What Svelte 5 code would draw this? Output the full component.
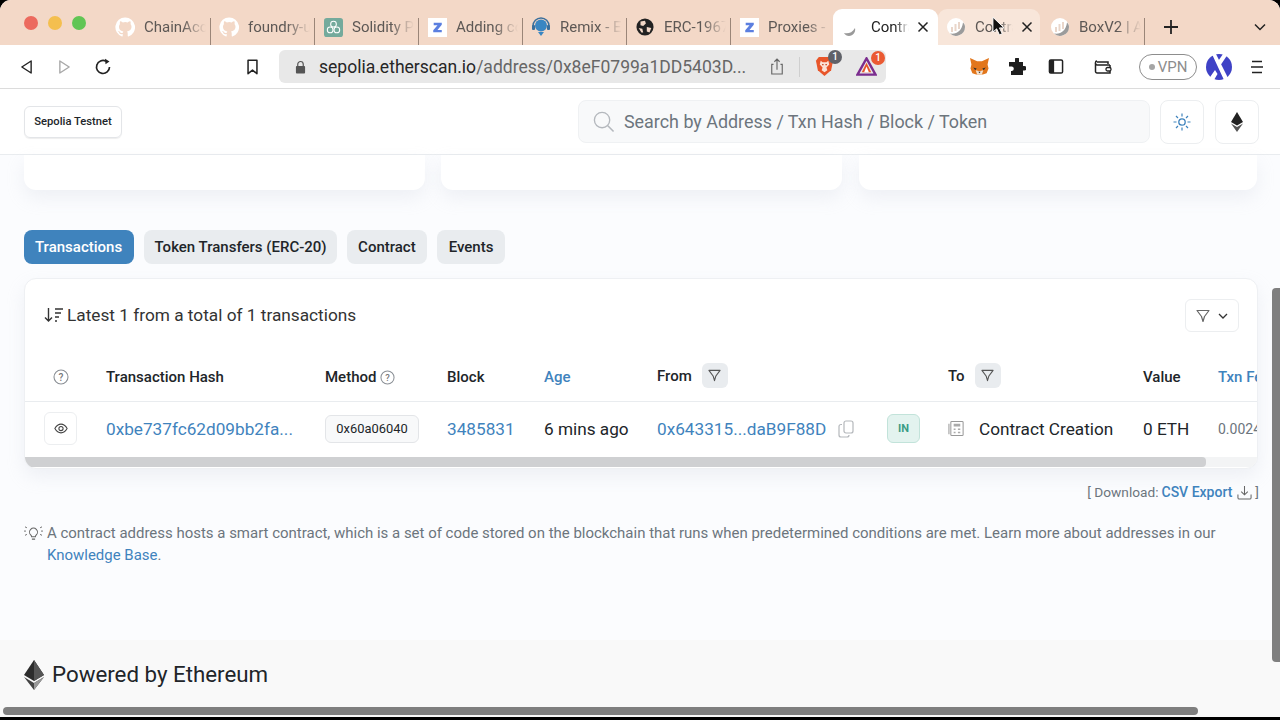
<script>
  const tabs = [
    { t: 'ChainAccount', i: 'gh' }, { t: 'foundry-upgrades', i: 'gh' }, { t: 'Solidity Patterns', i: 'gpt' },
    { t: 'Adding contracts', i: 'z' }, { t: 'Remix - Ethereum', i: 'remix' }, { t: 'ERC-1967 Proxy', i: 'globe' },
    { t: 'Proxies - OpenZep', i: 'z' }, { t: 'Contract', i: 'spin', active: true, close: true },
    { t: 'Contract', i: 'scan', hover: true, close: true }, { t: 'BoxV2 | Address', i: 'scan', last: true }
  ];
</script>

<div class="window">
  <div class="tabbar">
    <div class="lights"><i class="red"></i><i class="yellow"></i><i class="green"></i></div>
    {#each tabs as tab}
      <div class="tab" class:active={tab.active} class:hover={tab.hover} class:last={tab.last}>
        <span class="fav">
          {#if tab.i === 'gh'}
            <svg viewBox="0 0 20 20" width="20" height="20"><path fill="#fff" d="M10 0.5a9.7 9.7 0 0 0-3 18.9c.5.1.7-.2.7-.5v-1.8c-2.7.6-3.300-1.200-3.300-1.200-.4-1.100-1.100-1.400-1.100-1.400-.9-.6.1-.6.1-.6 1 .1 1.500 1 1.500 1 .9 1.500 2.300 1.100 2.900.8.1-.6.3-1.100.6-1.300-2.200-.3-4.400-1.100-4.400-4.800 0-1.100.4-1.900 1-2.600-.1-.2-.4-1.200.1-2.600 0 0 .8-.3 2.700 1a9 9 0 0 1 4.900 0c1.900-1.300 2.700-1 2.700-1 .5 1.400.2 2.400.1 2.600.6.7 1 1.500 1 2.600 0 3.700-2.300 4.500-4.500 4.800.4.300.7.900.7 1.800v2.700c0 .3.2.6.700.5A9.700 9.700 0 0 0 10 .5z"/></svg>
          {:else if tab.i === 'gpt'}
            <svg viewBox="0 0 20 20" width="19" height="19"><rect width="20" height="20" rx="3" fill="#74aa9c"/><g fill="none" stroke="#fff" stroke-width="1.100"><circle cx="10" cy="6.500" r="3"/><circle cx="6.500" cy="12.500" r="3"/><circle cx="13.500" cy="12.500" r="3"/></g></svg>
          {:else if tab.i === 'z'}
            <svg viewBox="0 0 20 20" width="19" height="19"><rect width="20" height="20" fill="#fff"/><path fill="#5b7fe0" d="M6 5h8.500v2L10 12.500h4.500V15H5.500v-2L10 7.500H6z"/></svg>
          {:else if tab.i === 'remix'}
            <svg viewBox="0 0 20 20" width="20" height="20"><circle cx="10" cy="8.500" r="6" fill="#3a86c2"/><path d="M2 9a8 8 0 0 1 16 0" fill="none" stroke="#3a6f9c" stroke-width="1.500"/><rect x="1" y="8" width="3" height="5" rx="1" fill="#3a6f9c"/><rect x="16" y="8" width="3" height="5" rx="1" fill="#3a6f9c"/><path d="M7 15h6l-3 4z" fill="#3a86c2"/></svg>
          {:else if tab.i === 'globe'}
            <svg viewBox="0 0 20 20" width="18" height="18"><circle cx="10" cy="10" r="9.500" fill="#222"/><path fill="#f3d8c7" d="M5 4l5-1 1 3-3 3-3-1zM12 10l5 1-2 5-3-1zM3 11l4 1 1 4-2 0z"/></svg>
          {:else if tab.i === 'spin'}
            <svg viewBox="0 0 20 20" width="20" height="20"><path d="M2 16c4 1 8 0 11-5 1 4-2 8-6 8-2 0-4-1-5-3z" fill="#9a9a9a"/></svg>
          {:else}
            <svg viewBox="0 0 20 20" width="20" height="20"><circle cx="10" cy="10" r="9" fill="#fff"/><path d="M19 10a9 9 0 0 1-15 6.500c7 1 12-3 13-11 1.300 1.300 2 2.800 2 4.500z" fill="#9b9b9b"/><path d="M6 15V10M9.500 14V7M13 12V5" stroke="#e9d6ca" stroke-width="2"/></svg>
          {/if}
        </span>
        <span class="title">{tab.t}</span>
        {#if tab.close}
          <svg class="close" viewBox="0 0 12 12" width="12" height="12"><path d="M1.500 1.500l9 9m0-9l-9 9" stroke="#222" stroke-width="1.500"/></svg>
        {/if}
      </div>
    {/each}
    <svg class="plus" viewBox="0 0 14 14" width="14" height="14"><path d="M7 0v14M0 7h14" stroke="#222" stroke-width="1.800"/></svg>
    <svg class="chev" viewBox="0 0 12 8" width="12" height="8"><path d="M1 1.500l5 5 5-5" fill="none" stroke="#222" stroke-width="1.500"/></svg>
  </div>

  <div class="toolbar">
    <span class="cell first"><svg viewBox="0 0 14 16" width="13" height="16"><path d="M12 1.500v13L2 8z" fill="none" stroke="#222" stroke-width="1.500" stroke-linejoin="round"/></svg></span>
    <span class="cell"><svg viewBox="0 0 14 16" width="13" height="16"><path d="M2 1.500v13L12 8z" fill="none" stroke="#a8a8a8" stroke-width="1.500" stroke-linejoin="round"/></svg></span>
    <span class="cell reload"><svg viewBox="0 0 18 18" width="18" height="18"><path d="M15.500 9A6.500 6.500 0 1 1 12 3.200" fill="none" stroke="#222" stroke-width="1.700"/><path d="M11 0.800l4.500 2.700-4 2.800z" fill="#222"/></svg></span>
    <span class="cell book"><svg viewBox="0 0 14 18" width="13" height="16"><path d="M2 1.500h10v15l-5-4-5 4z" fill="none" stroke="#222" stroke-width="1.700" stroke-linejoin="round"/></svg></span>
    <div class="url">
      <svg viewBox="0 0 12 14" width="11" height="14"><path d="M3 6V4a3 3 0 0 1 6 0v2" fill="none" stroke="#555" stroke-width="1.300"/><rect x="1" y="6" width="10" height="8" rx="1" fill="#555"/></svg>
      <span class="urltext"><b>sepolia.etherscan.io</b>/address/0x8eF0799a1DD5403D...</span>
      <svg class="share" viewBox="0 0 16 20" width="14" height="18"><path d="M4 7H2v11h12V7h-2M8 13V1.500M5 4l3-3 3 3" fill="none" stroke="#666" stroke-width="1.300"/></svg>
      <span class="urlsep"></span>
      <span class="ext brave">
        <svg viewBox="0 0 20 22" width="19" height="21"><path d="M4 1h12l3 4-2 10-7 6-7-6L1 5z" fill="#e8562a"/><path d="M6 5l2 1.500h4L14 5l1 4-3 3 1 3-3 2-3-2 1-3-3-3z" fill="#fbe3d6"/><path d="M7.500 9h1.500M11 9h1.500" stroke="#c9441e" stroke-width="1.200"/></svg>
        <em class="badge grey">1</em>
      </span>
      <span class="ext tri">
        <svg viewBox="0 0 22 20" width="21" height="19"><path d="M11 1.500l9.500 17h-19z" fill="none" stroke="#7b2d8e" stroke-width="2.500"/><path d="M11 6l5 10H6z" fill="#e8562a"/><path d="M11 10l2.500 6h-5z" fill="#fff"/></svg>
        <em class="badge orange">1</em>
      </span>
    </div>
    <span class="cell fox"><svg viewBox="0 0 22 20" width="21" height="19"><path d="M1 1l7.500 3.500h5L21 1l-1.500 7 1 4-2 5-4 1.500h-7L3.500 17l-2-5 1-4z" fill="#e2761b"/><path d="M8 12l-3.500-1 2 3zM14 12l3.500-1-2 3z" fill="#2e2e2e"/><path d="M7 14l4 1 4-1-1.500 4.500h-5z" fill="#f3e2d0"/><path d="M9.800 15.500h2.400L11 17z" fill="#2e2e2e"/></svg></span>
    <span class="cell puzzle"><svg viewBox="0 0 18 18" width="18" height="18"><path fill="#1e1e1e" d="M7 1a2 2 0 0 1 4 .5V4h4v4h1.500a2.200 2.200 0 0 1 0 4.500H15V17H3v-4h1a2.300 2.300 0 0 0 0-4.500H1V4h6z"/></svg></span>
    <span class="cell side"><svg viewBox="0 0 16 16" width="16" height="15"><rect x="1" y="1" width="14" height="14" rx="1.500" fill="none" stroke="#222" stroke-width="1.600"/><rect x="1" y="1" width="5" height="14" fill="#222"/></svg></span>
    <span class="cell wallet"><svg viewBox="0 0 18 16" width="18" height="16"><path d="M3 3h11v2M16 6v8H3a1.500 1.500 0 0 1-1.500-1.500v-9A1.500 1.500 0 0 1 3 2" fill="none" stroke="#222" stroke-width="1.500"/><path d="M1.500 4.500c0 1 .7 1.500 1.500 1.500h13" fill="none" stroke="#222" stroke-width="1.500"/><rect x="12" y="8.500" width="5" height="3.500" rx="1.500" fill="#fff" stroke="#222" stroke-width="1.300"/></svg></span>
    <span class="vpn"><i></i>VPN</span>
    <span class="cell xlogo"><svg viewBox="0 0 26 26" width="26" height="26"><circle cx="13" cy="13" r="13" fill="#3f42c6"/><path d="M5 -2l4 0 14 28h-5zM17 0h5L14 12l-2.500-4zM8 26H2l7-10 2.500 4z" fill="#fff"/></svg></span>
    <span class="cell menu"><svg viewBox="0 0 14 14" width="14" height="14"><path d="M2 1.500h10M1 7h12M2 12.500h10" stroke="#222" stroke-width="1.500"/></svg></span>
  </div>

  <header class="site">
    <span class="net">Sepolia Testnet</span>
    <div class="search">
      <svg viewBox="0 0 24 24" width="23" height="23"><circle cx="10.500" cy="10.500" r="8" fill="none" stroke="#b4b8bd" stroke-width="1.400"/><path d="M16.500 16.500l6 6" stroke="#b4b8bd" stroke-width="1.600"/></svg>
      <span>Search by Address / Txn Hash / Block / Token</span>
    </div>
    <span class="hbtn sun"><svg viewBox="0 0 18 18" width="18" height="18"><circle cx="9" cy="9" r="3.200" fill="none" stroke="#3f83bd" stroke-width="1.300"/><path d="M9 .5v3M9 14.500v3M.5 9h3M14.500 9h3M3 3l2 2M13 13l2 2M15 3l-2 2M5 13l-2 2" stroke="#3f83bd" stroke-width="1.200"/></svg></span>
    <span class="hbtn"><svg viewBox="0 0 12 20" width="12" height="20"><path d="M6 0l6 10-6 3.500L0 10z" fill="#222"/><path d="M6 15l6-3.600L6 20 0 11.400z" fill="#555"/></svg></span>
  </header>

  <main>
    <div class="cards"><div></div><div></div><div></div></div>
    <nav class="pills">
      <span class="pill on">Transactions</span>
      <span class="pill token">Token Transfers (ERC-20)</span>
      <span class="pill">Contract</span>
      <span class="pill events">Events</span>
    </nav>
    <section class="panel">
      <div class="panelhead">
        <div class="latest">
          <svg viewBox="0 0 20 16" width="20" height="16"><path d="M4.500 1v13M1 10.500L4.500 14 8 10.500M11 2h8M11 6h6M11 10h4M11 14h2" fill="none" stroke="#333" stroke-width="1.400"/></svg>
          <span>Latest 1 from a total of 1 transactions</span>
        </div>
        <span class="filterbtn">
          <svg viewBox="0 0 14 14" width="14" height="14"><path d="M1 1.500h12L8.500 7.500 7 12.500 5.500 7.500z" fill="none" stroke="#666" stroke-width="1.200" stroke-linejoin="round"/></svg>
          <svg viewBox="0 0 10 6" width="10" height="6"><path d="M1 1l4 4 4-4" fill="none" stroke="#333" stroke-width="1.300"/></svg>
        </span>
      </div>
      <div class="grid thead">
        <span class="c0"><svg viewBox="0 0 16 16" width="16" height="16"><circle cx="8" cy="8" r="7" fill="none" stroke="#8a8f95" stroke-width="1.100"/><text x="8" y="11.500" font-size="10" text-anchor="middle" fill="#777">?</text></svg></span>
        <span>Transaction Hash</span>
        <span class="m">Method <svg viewBox="0 0 16 16" width="15" height="15"><circle cx="8" cy="8" r="7" fill="none" stroke="#8a8f95" stroke-width="1.100"/><text x="8" y="11.500" font-size="10" text-anchor="middle" fill="#777">?</text></svg></span>
        <span>Block</span>
        <span class="blue">Age</span>
        <span class="f">From <i class="fbtn"><svg viewBox="0 0 14 14" width="13" height="13"><path d="M1 1.500h12L8.500 7.500 7 12.500 5.500 7.500z" fill="none" stroke="#555" stroke-width="1.200" stroke-linejoin="round"/></svg></i></span>
        <span></span>
        <span class="f">To <i class="fbtn"><svg viewBox="0 0 14 14" width="13" height="13"><path d="M1 1.500h12L8.500 7.500 7 12.500 5.500 7.500z" fill="none" stroke="#555" stroke-width="1.200" stroke-linejoin="round"/></svg></i></span>
        <span>Value</span>
        <span class="blue">Txn Fee</span>
      </div>
      <div class="grid tbody">
        <span class="c0"><i class="eye"><svg viewBox="0 0 16 12" width="14" height="11"><path d="M1 6c2-3.500 4.500-5 7-5s5 1.500 7 5c-2 3.500-4.500 5-7 5s-5-1.500-7-5z" fill="none" stroke="#444" stroke-width="1.200"/><circle cx="8" cy="6" r="2.400" fill="none" stroke="#444" stroke-width="1.200"/></svg></i></span>
        <span class="link">0xbe737fc62d09bb2fa...</span>
        <span><i class="method">0x60a06040</i></span>
        <span class="link">3485831</span>
        <span>6 mins ago</span>
        <span class="from"><span class="link">0x643315...daB9F88D</span>
          <svg viewBox="0 0 18 18" width="18" height="18"><rect x="7" y="1" width="9" height="12" rx="2" fill="none" stroke="#b4b7bb" stroke-width="1.200"/><path d="M5 4.500H4a2 2 0 0 0-2 2V15a2 2 0 0 0 2 2h6a2 2 0 0 0 2-2" fill="none" stroke="#b4b7bb" stroke-width="1.200"/></svg>
        </span>
        <span><i class="in">IN</i></span>
        <span class="to">
          <svg viewBox="0 0 18 18" width="17" height="17"><rect x="3" y="1.500" width="13" height="15" rx="1" fill="none" stroke="#999" stroke-width="1.100"/><path d="M1 4v11" stroke="#999" stroke-width="1.100"/><path d="M6 4h7v3H6zM6 9h2v1.500H6zM10.500 9h2.500v1.500h-2.500zM6 12.500h2V14H6zM10.500 12.500h2.500V14h-2.500z" fill="#aaa"/></svg>
          Contract Creation
        </span>
        <span>0 ETH</span>
        <span class="fee">0.00249</span>
      </div>
      <div class="hscroll"><div></div></div>
    </section>
    <div class="download">[ Download: <b>CSV Export</b>
      <svg viewBox="0 0 16 16" width="15" height="15"><path d="M8 1v9M4.500 7L8 10.500 11.500 7M1 10v3.500A1.500 1.500 0 0 0 2.500 15h11a1.500 1.500 0 0 0 1.500-1.500V10" fill="none" stroke="#666" stroke-width="1.100"/></svg> ]
    </div>
    <div class="note">
      <svg viewBox="0 0 20 18" width="19" height="17"><path d="M7 11.500a4.200 4.200 0 1 1 6 0c-.7.7-1 1.300-1 2H8c0-.7-.3-1.300-1-2zM8.300 16h3.400" fill="none" stroke="#666" stroke-width="1.100"/><path d="M1 3l2 1M0 7.500h2M1 12l2-1M19 3l-2 1M20 7.500h-2M19 12l-2-1" stroke="#666" stroke-width="1"/></svg>
      <p>A contract address hosts a smart contract, which is a set of code stored on the blockchain that runs when predetermined conditions are met. Learn more about addresses in our <a>Knowledge Base</a>.</p>
    </div>
  </main>

  <footer>
    <svg viewBox="0 0 20 30" width="20" height="30"><path d="M10 0l10 15-10 6L0 15z" fill="#2c2c2c"/><path d="M10 0l10 15-10 6z" fill="#555"/><path d="M10 23l10-6-10 13L0 17z" fill="#444"/><path d="M10 23l10-6-10 13z" fill="#999"/></svg>
    <span>Powered by Ethereum</span>
  </footer>

  <div class="vbar"></div>
  <div class="bbar"></div>
  <svg class="cursor" viewBox="0 0 14 22" width="13" height="21"><path d="M1 1v16l4-3.500 3 6.500 3-1.300-3-6.200h5z" fill="#111" stroke="#fff" stroke-width="1"/></svg>
</div>

<style>
  :global(body) { margin: 0; background: #000; }
  .window {
    position: relative; width: 1280px; height: 717px; overflow: hidden;
    display: flex; flex-direction: column;
    border-radius: 11px 11px 0 0; background: #fbfcfe;
    font-family: Roboto, "Liberation Sans", sans-serif; color: #212529; font-size: 15px;
  }
  .tabbar { flex: 0 0 45px; display: flex; align-items: stretch; background: #f3d8c7; padding-left: 24px; box-sizing: border-box; }
  .lights { width: 82px; display: flex; gap: 10px; padding-top: 16px; }
  .lights i { width: 14px; height: 14px; border-radius: 50%; }
  .red { background: #ec6a5e; } .yellow { background: #f4bf4f; } .green { background: #61c554; }
  .tab { position: relative; width: 104px; flex: none; margin-top: 9px; display: flex; align-items: center; padding-left: 9px; box-sizing: border-box; color: #5d5855; font-size: 15px; }
  .tab::after { content: ""; position: absolute; right: -1px; top: 9px; bottom: 0; width: 1px; background: #9a8578; }
  .tab.active, .tab.hover { border-radius: 9px 9px 0 0; }
  .tab.active { background: #fff; color: #222; width: 105px; margin-left: -1px; }
  .tab.hover { background: #f8e6da; color: #5d5855; width: 102px; padding-left: 8px; }
  .tab.last { padding-left: 10px; }
  .tab.active::after, .tab.hover::after, .tab:nth-child(8)::after { display: none; }
  .fav { width: 20px; height: 20px; flex: none; display: flex; align-items: center; justify-content: center; margin-right: 9px; }
  .title { white-space: nowrap; overflow: hidden; width: 62px; -webkit-mask-image: linear-gradient(to right, #000 62%, transparent); mask-image: linear-gradient(to right, #000 62%, transparent); }
  .tab.active .title, .tab.hover .title { width: 38px; }
  .close { margin-left: 8px; flex: none; }
  .plus { align-self: center; margin: 9px 0 0 20px; }
  .chev { align-self: center; margin: 9px 0 0 76px; }

  .toolbar { flex: 0 0 44px; display: flex; align-items: center; background: #fff; border-bottom: 1px solid #dcdcdc; box-sizing: border-box; }
  .cell { width: 38px; height: 34px; flex: none; display: flex; align-items: center; justify-content: center; }
  .first { margin-left: 7px; }
  .reload { margin-left: 1px; }
  .book { margin-left: 111px; margin-right: 8px; }
  .url { width: 607px; height: 33px; flex: none; background: #e8e8e8; border-radius: 6px; display: flex; align-items: center; padding-left: 16px; box-sizing: border-box; color: #666; font-size: 17.550px; }
  .urltext { margin-left: 13px; width: 452px; white-space: nowrap; }
  .urltext b { font-weight: 400; color: #262626; }
  .share { margin-left: -1px; }
  .urlsep { width: 1px; height: 20px; background: #cfcfcf; margin-left: 15px; }
  .ext { position: relative; display: flex; margin-left: 15px; }
  .tri { margin-left: 22px; }
  .badge { position: absolute; top: -6px; right: -8px; width: 14px; height: 14px; border-radius: 50%; color: #fff; font: 500 10px/14px Roboto, sans-serif; text-align: center; }
  .grey { background: #5f6168; } .orange { background: #ea5a33; }
  .fox { margin-left: 74px; }
  .side { margin-left: 1px; }
  .wallet { margin-left: 9px; }
  .vpn { width: 58px; height: 26px; margin-left: 17px; flex: none; border: 1.500px solid #8d8d8d; border-radius: 14px; box-sizing: border-box; display: flex; align-items: center; justify-content: center; gap: 3px; color: #8d8d8d; font-size: 15px; }
  .vpn i { width: 6px; height: 6px; border-radius: 50%; background: #a5a5a5; }
  .xlogo { margin-left: 2px; } .menu { margin-left: 1px; }
  .xlogo svg { margin-left: 2px; }

  .site { flex: 0 0 66px; display: flex; align-items: center; background: #fff; border-bottom: 1px solid #e9ecef; box-sizing: border-box; padding: 0 21px 0 24px; }
  .net { width: 98px; height: 32px; box-sizing: border-box; border: 1px solid #e3e5e8; border-radius: 6px; display: flex; align-items: center; justify-content: center; font-size: 11.200px; font-weight: 500; margin-right: 456px; box-shadow: 0 1px 1px #eee; }
  .search { width: 572px; height: 43px; box-sizing: border-box; background: #f8f9fa; border: 1px solid #eff1f3; border-radius: 8px; display: flex; align-items: center; gap: 9px; padding-left: 13px; color: #6c757d; font-size: 17.900px; margin-right: 10px; }
  .hbtn { width: 44px; height: 44px; box-sizing: border-box; border: 1px solid #eceef0; border-radius: 8px; display: flex; align-items: center; justify-content: center; margin-left: 11px; }
  .hbtn.sun { margin-left: 0; }

  main { flex: 1; padding: 0 22px 0 24px; min-height: 0; }
  .cards { display: grid; grid-template-columns: 401px 401px 399px; column-gap: 16px; height: 35px; margin-bottom: 40px; }
  .cards div { background: #fff; border-radius: 0 0 12px 12px; box-shadow: 0 8px 18px rgba(189,197,209,.2); }
  .cards div:last-child { margin-left: 1px; }
  .pills { display: flex; gap: 10px; margin-bottom: 14px; }
  .pill { height: 34px; padding: 0 11px; border-radius: 8px; background: #e9ecef; display: flex; align-items: center; font-weight: 500; font-size: 15px; }
  .pill.on { background: #3f83bd; color: #fff; width: 110px; box-sizing: border-box; }
  .pill.token { padding: 0 10.500px; }
  .pill.events { padding: 0 12px; }
  .panel { background: #fff; border: 1px solid #eef0f3; border-radius: 12px; box-shadow: 0 8px 18px rgba(189,197,209,.2); height: 191px; box-sizing: border-box; overflow: hidden; }
  .panelhead { height: 74px; display: flex; align-items: center; justify-content: space-between; padding: 0 18px 0 19px; }
  .latest { display: flex; align-items: center; gap: 3px; font-size: 17.250px; color: #333; margin-top: -2px; }
  .filterbtn { width: 54px; height: 33px; box-sizing: border-box; border: 1px solid #eceef0; border-radius: 6px; display: flex; align-items: center; justify-content: center; gap: 8px; margin-top: -1px; }
  .grid { display: grid; grid-template-columns: 81px 219px 122px 97px 113px 230px 61px 195px 75px 100px; align-items: center; white-space: nowrap; }
  .thead { height: 48px; border-bottom: 1px solid #e9ecef; font-weight: 500; font-size: 15px; }
  .tbody { height: 55px; box-sizing: border-box; padding-bottom: 2px; font-size: 17.200px; }
  .c0 { display: flex; justify-content: center; width: 71px; }
  .m { display: flex; align-items: center; gap: 4px; }
  .f { display: flex; align-items: center; gap: 10px; margin-top: -3px; }
  .fbtn { width: 26px; height: 25px; border-radius: 6px; background: #e9ecef; display: flex; align-items: center; justify-content: center; }
  .blue { color: #3f83bd; }
  .link { color: #3f83bd; }
  .eye { width: 33px; height: 33px; box-sizing: border-box; border: 1px solid #eceef0; border-radius: 6px; display: flex; align-items: center; justify-content: center; }
  .method { display: inline-flex; width: 94px; height: 28px; box-sizing: border-box; align-items: center; justify-content: center; font-style: normal; font-size: 12.900px; background: #f8f9fa; border: 1px solid #e3e5e8; border-radius: 6px; }
  .from { display: flex; align-items: center; gap: 11px; }
  .in { display: inline-flex; width: 33px; height: 29px; align-items: center; justify-content: center; box-sizing: border-box; font-style: normal; font-size: 11px; font-weight: 700; color: #3a9c85; background: #e3f3ef; border: 1px solid #c2e3da; border-radius: 6px; }
  .to { display: flex; align-items: center; gap: 14px; }
  .fee { color: #6c757d; font-size: 14px; }
  .hscroll { height: 10px; background: #f3f4f5; }
  .hscroll div { width: 1181px; height: 10px; background: #cfd0d2; border-radius: 0 4px 4px 4px; }
  .download { display: flex; justify-content: flex-end; align-items: center; gap: 3px; height: 22px; margin-top: 12px; margin-right: -1px; color: #6c757d; font-size: 13.700px; }
  .download b { color: #3f83bd; font-weight: 500; font-size: 14px; margin-right: 2px; }
  .note { display: flex; gap: 4px; margin-top: 19px; color: #6c757d; font-size: 14.980px; line-height: 22px; }
  .note svg { flex: none; margin-top: 2px; }
  .note p { margin: 0; width: 1190px; }
  .note a { color: #3f83bd; }

  footer { flex: 0 0 77px; background: #f9f9f9; display: flex; align-items: flex-start; gap: 8px; padding: 20px 0 0 24px; box-sizing: border-box; font-size: 22.300px; }
  footer span { line-height: 29px; }
  .vbar { position: absolute; left: 1272px; top: 288px; width: 8px; height: 374px; background: #7f7f7f; border-radius: 4px 0 0 4px; }
  .bbar { position: absolute; left: 3px; top: 707px; width: 1195px; height: 8px; background: #7f7f7f; border-radius: 4px; }
  .cursor { position: absolute; left: 992px; top: 16px; }
</style>
